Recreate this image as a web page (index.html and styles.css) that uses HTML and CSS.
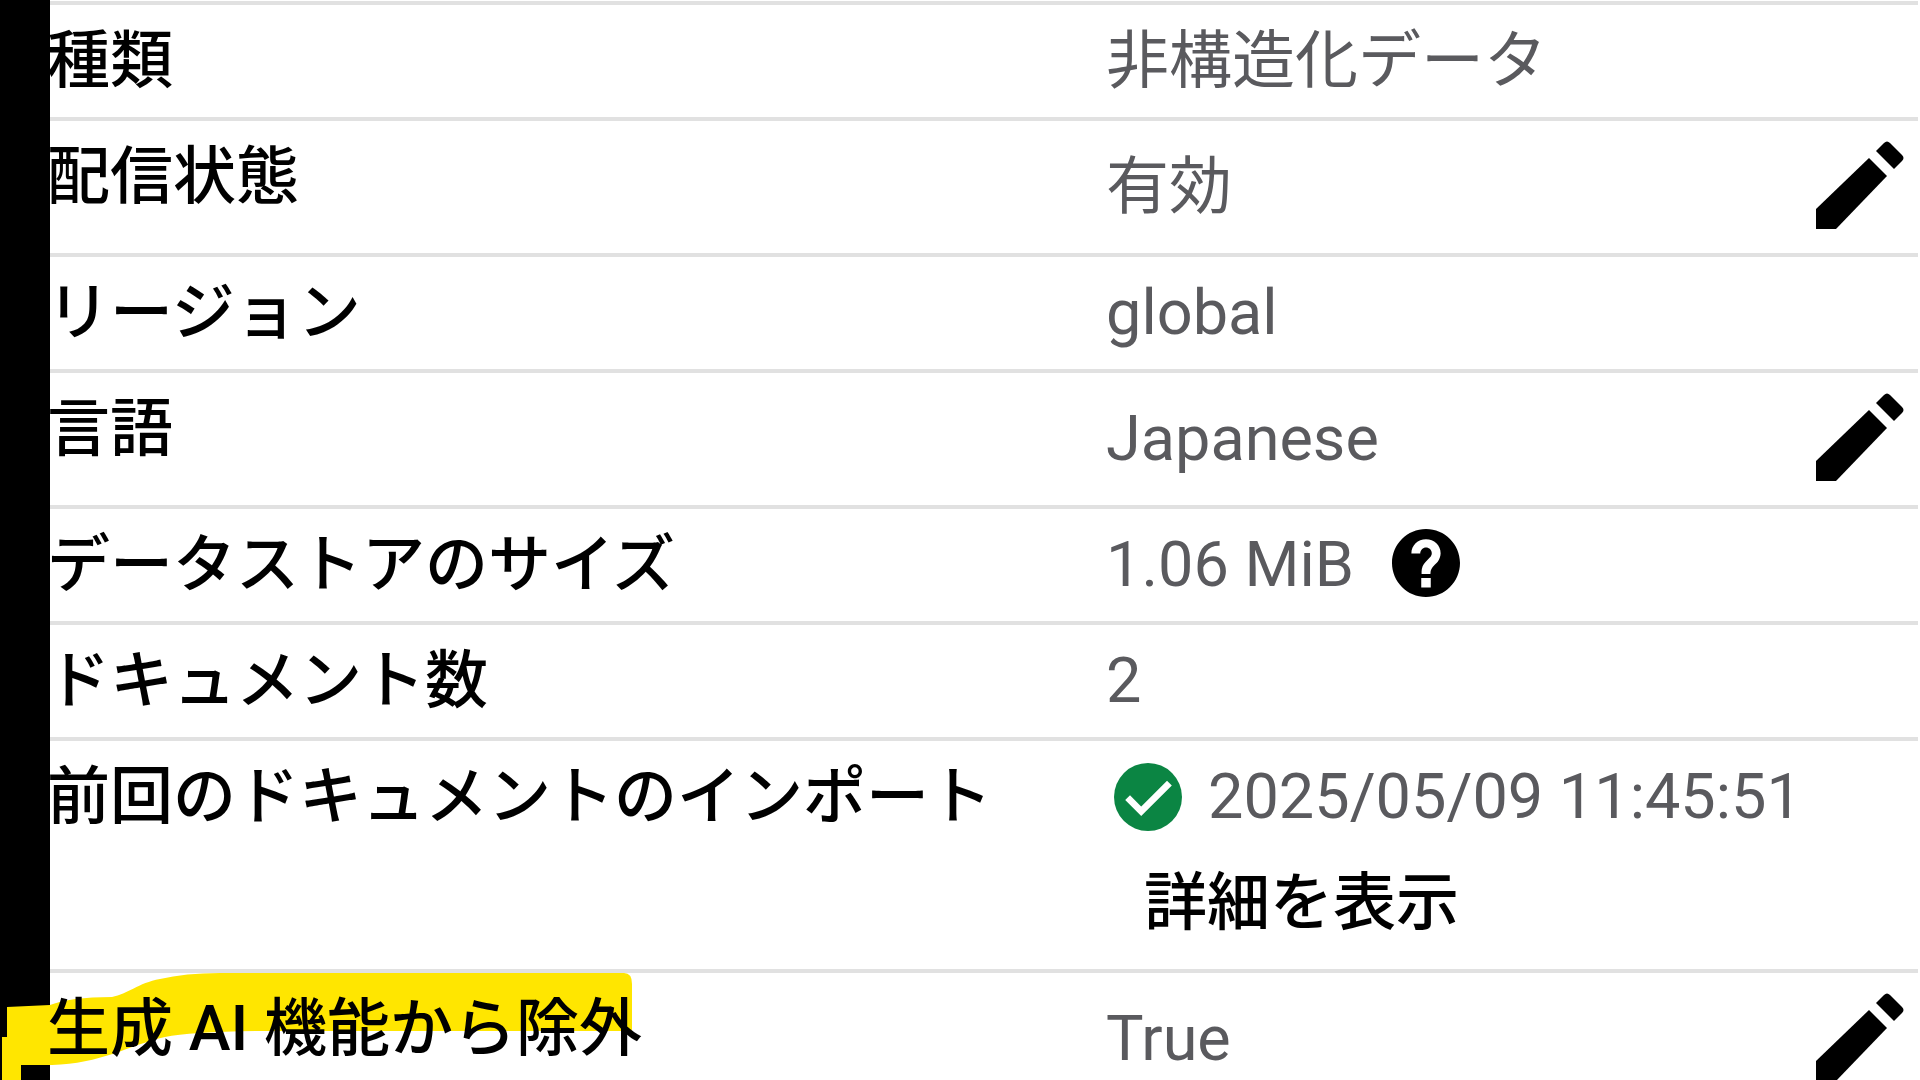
FILE: index.html
```
<!DOCTYPE html>
<html lang="ja">
<head>
<meta charset="utf-8">
<title>データストアの詳細</title>
<link rel="stylesheet" href="styles.css">
</head>
<body>
<svg class="defs" aria-hidden="true">
  <symbol id="pencil" viewBox="0 0 88 88"><path d="M0 68V88H20L71 35 53 17Z"/><path d="M60 10L68 2Q71 -1 74 2L86 14Q89 17 86 20L78 28Z"/></symbol>
</svg>
<div class="frame">
  <main class="panel">
    <table class="details">
      <colgroup>
        <col class="col-label">
        <col>
        <col class="col-action">
      </colgroup>
      <tbody>
        <tr>
          <th scope="row">種類</th>
          <td colspan="2">非構造化データ</td>
        </tr>
        <tr class="editable">
          <th scope="row">配信状態</th>
          <td>有効</td>
          <td><button class="edit" type="button" aria-label="配信状態を編集"><svg><use href="#pencil"/></svg></button></td>
        </tr>
        <tr>
          <th scope="row">リージョン</th>
          <td colspan="2">global</td>
        </tr>
        <tr class="editable">
          <th scope="row">言語</th>
          <td>Japanese</td>
          <td><button class="edit" type="button" aria-label="言語を編集"><svg><use href="#pencil"/></svg></button></td>
        </tr>
        <tr>
          <th scope="row">データストアのサイズ</th>
          <td colspan="2">
            <div class="inline size">1.06 MiB
              <button class="help" type="button" aria-label="ヘルプ"><svg viewBox="2 2 20 20"><path d="M12 2C6.48 2 2 6.48 2 12s4.48 10 10 10 10-4.48 10-10S17.52 2 12 2zm1.4 17.2h-2.8v-2.8h2.8v2.8zm2-7.5l-.9.92C13.7 13.5 13.3 14 13.3 15.2h-2.6v-.7c0-1.1.45-2.1 1.17-2.83l1.24-1.26c.37-.36.59-.86.59-1.3 0-1-.8-1.7-1.7-1.7s-1.7.8-1.7 1.8H7.7c0-2.4 1.9-4.2 4.3-4.2s4.3 1.8 4.3 4.1c0 .9-.36 1.8-.9 2.59z"/></svg></button>
            </div>
          </td>
        </tr>
        <tr>
          <th scope="row">ドキュメント数</th>
          <td colspan="2">2</td>
        </tr>
        <tr>
          <th scope="row">前回のドキュメントのインポート</th>
          <td colspan="2">
            <div class="inline status"><svg class="check" viewBox="2 2 20 20"><circle cx="12" cy="12" r="10"/><path d="M6 12.2L10 16.2L18.3 7.9"/></svg>2025/05/09 11:45:51</div>
            <button class="more" type="button">詳細を表示</button>
          </td>
        </tr>
        <tr class="editable">
          <th scope="row" class="marked">生成 AI 機能から除外<svg class="marker" viewBox="0 970 640 112" aria-hidden="true"><path d="M7 1007L50 1005Q70 997 112 997C128 994 138 983 160 979Q185 973 220 973H624Q632 973 632 984V1031L260 1031Q190 1032 165 1037C130 1045 100 1064 52 1065H21V1082H2V1037H7Z"/></svg></th>
          <td>True</td>
          <td><button class="edit" type="button" aria-label="生成 AI 機能から除外を編集"><svg><use href="#pencil"/></svg></button></td>
        </tr>
      </tbody>
    </table>
  </main>
</div>
</body>
</html>
```
FILE: styles.css
```
* {
  box-sizing: border-box;
}

body {
  margin: 0;
  background: #fff;
  color: #000;
  font-family: Roboto, "Noto Sans CJK JP", sans-serif;
  font-size: 63px;
  line-height: 112px;
}

.defs {
  position: absolute;
  width: 0;
  height: 0;
}

.frame {
  height: 100vh;
  overflow: hidden;
  background: linear-gradient(to right, #000 50px, #fff 50px);
}

.panel {
  padding: 1px 2px 0 50px;
}

.details {
  width: 100%;
  table-layout: fixed;
  border-collapse: separate;
  border-spacing: 0;
  isolation: isolate;
}

.col-label {
  width: 1056px;
}

.col-action {
  width: 120px;
}

.details th,
.details td {
  padding: 0;
  border-top: 4px solid #e1e1e1;
  text-align: left;
  vertical-align: top;
  white-space: nowrap;
}

.details th {
  font-weight: 500;
  text-indent: -3px;
}

.details td {
  color: #5a5a5e;
}

.details .editable td {
  height: 136px;
  vertical-align: middle;
}

button {
  display: block;
  padding: 0;
  border: 0;
  background: none;
  color: #000;
  font: inherit;
  cursor: pointer;
}

.edit {
  width: 88px;
  height: 88px;
  margin: 0 0 4px 18px;
}

.edit svg,
.help svg {
  display: block;
  width: 100%;
  height: 100%;
}

.inline {
  display: flex;
  align-items: center;
}

.size {
  gap: 38px;
}

.help {
  width: 68px;
  height: 68px;
  margin-bottom: 4px;
}

.status {
  gap: 26px;
  padding-left: 8px;
}

.check {
  flex: none;
  width: 68px;
  height: 68px;
}

.check circle {
  fill: #0b8543;
}

.check path {
  fill: none;
  stroke: #fff;
  stroke-width: 2;
}

.more {
  display: flex;
  height: 116px;
  padding-left: 38px;
  font-weight: 500;
  line-height: 100px;
}

.details .marked {
  position: relative;
}

.marker {
  position: absolute;
  z-index: -1;
  top: -3px;
  left: -50px;
  width: 640px;
  height: 112px;
  fill: #ffe600;
}
```
